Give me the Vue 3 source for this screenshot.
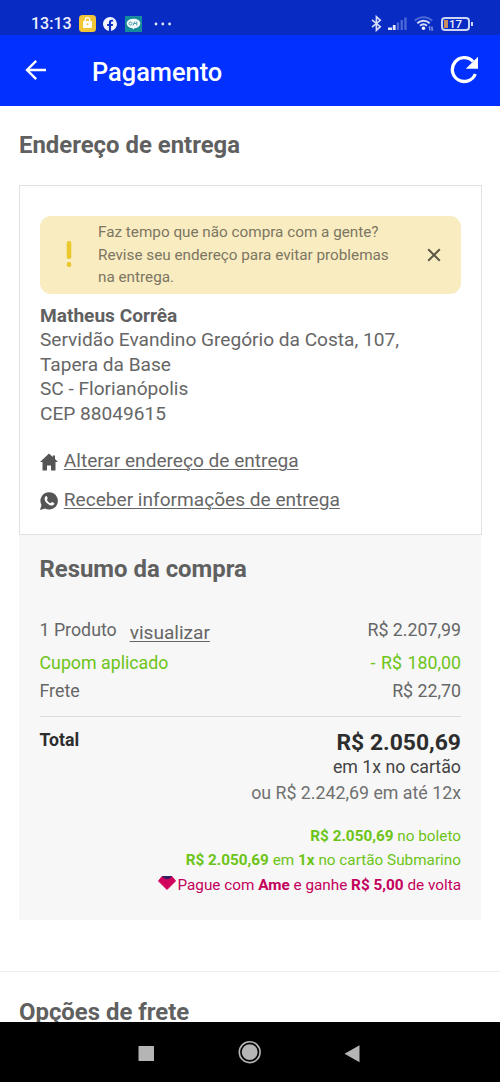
<script setup>
const address = [
  'Servidão Evandino Gregório da Costa, 107,',
  'Tapera da Base',
  'SC - Florianópolis',
  'CEP 88049615',
]
</script>

<template>
  <div class="screen">
    <div class="status">
      <span class="clock">13:13</span>
      <svg class="app-bag" width="17" height="17" viewBox="0 0 17 17">
        <rect width="17" height="17" rx="3.5" fill="#f2c537" />
        <path d="M6.2 6V5a2.3 2.3 0 0 1 4.6 0v1" fill="none" stroke="#fff" stroke-width="1.2" />
        <rect x="4" y="6" width="9" height="7" rx="1" fill="#fff" />
        <circle cx="8.5" cy="9.3" r="1" fill="#f2c537" />
      </svg>
      <svg class="app-fb" width="14" height="14" viewBox="0 0 24 24">
        <path fill="#f2f5ff" d="M24 12a12 12 0 1 0-13.9 11.9v-8.4H7.1V12h3V9.400c0-3 1.800-4.700 4.500-4.700 1.300 0 2.700.2 2.700.2v3h-1.500c-1.500 0-2 .9-2 1.900V12h3.400l-.5 3.500h-2.900v8.400A12 12 0 0 0 24 12z" />
      </svg>
      <svg class="app-oi" width="17" height="16" viewBox="0 0 17 16">
        <rect width="17" height="16" fill="#168b9c" />
        <ellipse cx="8.500" cy="7.500" rx="6.800" ry="4.800" fill="#f4fbfb" />
        <path d="M7 11.500h3l-1.500 2z" fill="#f4fbfb" />
        <circle cx="5.500" cy="7.500" r="1.500" fill="none" stroke="#4c9aa5" />
        <path d="M8 9.500 9.800 5.500M9 7.500h2.500M11.800 5.500v4" fill="none" stroke="#4c9aa5" />
      </svg>
      <svg class="more" width="18" height="4" viewBox="0 0 18 4" fill="#e6eaff">
        <circle cx="2" cy="2" r="1.400" /><circle cx="8.800" cy="2" r="1.400" /><circle cx="15.600" cy="2" r="1.400" />
      </svg>
      <svg class="bt" width="11" height="17" viewBox="0 0 11 17">
        <path d="M1 4.800 9.300 11.700 5.400 15.300V1.700L9.300 5.300 1 12.200" fill="none" stroke="#d9dff9" stroke-width="1.600" />
      </svg>
      <svg class="signal" width="19" height="13" viewBox="0 0 19 13">
        <path d="M0 10.500h4V13H0zM4.800 8h2.800v5h-2.800z" fill="#e4e9ff" />
        <path d="M8.800 5.500h2.300V13H8.800zM12.600 3h2.300v10h-2.300zM16.300.5h2.300V13h-2.300z" fill="#4e68d6" />
      </svg>
      <svg class="wifi" width="20" height="15" viewBox="0 0 20 15">
        <path d="M.8 4.800C5.700 0 13.300 0 18.200 4.800" fill="none" stroke="#4e68d6" stroke-width="1.900" />
        <path d="M3.300 7.300c3.600-3.400 8.800-3.400 12.400 0M6 9.800c2.100-1.900 4.900-1.900 7 0" fill="none" stroke="#d5dcfa" stroke-width="1.900" />
        <circle cx="9.500" cy="12.300" r="1.700" fill="#fff" />
        <path d="M15.800 10.500v4M15.800 10.500l-1 1M18 10.500v4M18 14.500l1-1" stroke="#aebbf0" fill="none" />
      </svg>
      <div class="battery"><i></i><span>17</span></div>
    </div>

    <header class="bar">
      <svg class="back" width="22" height="22" viewBox="0 0 22 22">
        <path d="M21 11H2.200M11.200 1.800 2 11l9.200 9.200" fill="none" stroke="#fff" stroke-width="2.400" />
      </svg>
      <h1>Pagamento</h1>
      <svg class="reload" width="28" height="28" viewBox="0 0 28 28">
        <path d="M23 5.500A11.900 11.900 0 1 0 25.300 18" fill="none" stroke="#fff" stroke-width="3.300" />
        <path d="M28 .8V12.800H15.800z" fill="#fff" />
      </svg>
    </header>

    <main>
      <h2 class="t-address">Endereço de entrega</h2>
      <section class="card">
        <div class="alert">
          <svg class="bang" width="6" height="27" viewBox="0 0 6 27" fill="#ecc82f">
            <rect x=".7" y="0" width="4.600" height="18" rx="2" />
            <rect x=".7" y="21" width="4.600" height="5" rx="2" />
          </svg>
          <p>Faz tempo que não compra com a gente?<br />Revise seu endereço para evitar problemas<br />na entrega.</p>
          <svg class="close" width="14" height="14" viewBox="0 0 14 14">
            <path d="M1.200 1.200l11.600 11.600M12.800 1.200 1.200 12.800" stroke="#5c5745" stroke-width="2" />
          </svg>
        </div>
        <div class="address">
          <strong>Matheus Corrêa</strong>
          <div v-for="line in address" :key="line">{{ line }}</div>
        </div>
        <div class="link">
          <svg width="18" height="18" viewBox="0 0 18 18">
            <path d="M9 .5 0 9h2.500v8.500H7v-5h4v5h4.500V9H18l-3-2.900V2.500h-2.200V4z" fill="#555" />
          </svg>
          <a>Alterar endereço de entrega</a>
        </div>
        <div class="link">
          <svg width="18" height="18" viewBox="0 0 18 18">
            <path d="M9.200.2a8.700 8.700 0 1 1-4.100 16.400L0 17.900l1.500-4.800A8.700 8.700 0 0 1 9.200.2z" fill="#555" />
            <path d="M5.500 4.400c.5-.5 1.200-.4 1.400.1l.8 1.700c.1.500-.7 1.200-.8 1.500.8 1.700 2 2.800 3.800 3.500.5-.3 1-1.300 1.500-1.100l1.800.9c.5.300.3 1.300-.1 1.800-1.100 1.100-2.700 1-4.500.1-2.300-1.100-4.200-3.100-4.700-5.100-.3-1.300 0-2.500.8-3.400z" fill="#fff" />
          </svg>
          <a>Receber informações de entrega</a>
        </div>
      </section>

      <section class="summary">
        <h2 class="t-summary">Resumo da compra</h2>
        <div class="row first"><span>1 Produto <a>visualizar</a></span><span>R$ 2.207,99</span></div>
        <div class="row green"><span>Cupom aplicado</span><span class="discount">- R$ 180,00</span></div>
        <div class="row"><span>Frete</span><span>R$ 22,70</span></div>
        <div class="total">
          <strong class="label">Total</strong>
          <div class="amounts">
            <strong class="price">R$ 2.050,69</strong>
            <span class="once">em 1x no cartão</span>
            <span class="parts">ou R$ 2.242,69 em até 12x</span>
          </div>
        </div>
        <div class="offers">
          <div><b>R$ 2.050,69</b> no boleto</div>
          <div><b>R$ 2.050,69</b> em <b>1x</b> no cartão Submarino</div>
          <div class="ame">
            <svg width="18" height="14" viewBox="0 0 18 14">
              <path d="M4 .5h10L17.500 5 9 13.500.5 5z" fill="#d1005d" stroke="#d1005d" stroke-linejoin="round" />
              <path d="M4 0h10l-2 2.200c-2 1.300-4 1.300-6 0z" fill="#33205e" />
            </svg>
            <span>Pague com <b>Ame</b> e ganhe <b>R$ 5,00</b> de volta</span>
          </div>
        </div>
      </section>

      <section class="shipping"><h2>Opções de frete</h2></section>
    </main>

    <nav>
      <svg width="500" height="60" viewBox="0 0 500 60" fill="#b5b5b5">
        <rect x="138.500" y="24" width="15.500" height="15" rx=".5" />
        <circle cx="249.700" cy="30.200" r="10.400" fill="none" stroke="#b5b5b5" stroke-width="1.600" />
        <circle cx="249.700" cy="30.200" r="7.900" />
        <path d="M359.500 23.300v17L344.500 31.800z" />
      </svg>
    </nav>
  </div>
</template>

<style>
body { margin: 0; background: #fff; }
</style>

<style scoped>
* { box-sizing: border-box; }
.screen { width: 500px; height: 1082px; display: flex; flex-direction: column; overflow: hidden; background: #fff; color: #666; font-family: Roboto, "Noto Sans", sans-serif; white-space: nowrap; }
h1, h2, p { margin: 0; }
.status { height: 35px; flex: none; display: flex; align-items: center; padding: 12px 30px 0 31px; background: #082bc4; color: #eef1ff; }
.status svg { flex: none; }
.clock { width: 48px; font-size: 16px; font-weight: 500; line-height: 22px; }
.app-fb { margin-left: 7px; }
.app-oi { margin-left: 8px; }
.more { margin-left: 12px; }
.bt { margin-left: auto; }
.signal { margin-left: 6px; }
.wifi { margin-left: 7px; }
.battery { width: 29px; height: 14px; margin-left: 7px; border: 2px solid #cdd5f7; border-radius: 4px; display: flex; align-items: center; position: relative; flex: none; }
.battery::after { content: ""; position: absolute; right: -5px; top: 3px; width: 2px; height: 4px; background: #cdd5f7; }
.battery i { width: 4px; height: 8px; margin-left: 1px; background: #c88e62; }
.battery span { margin-left: 1px; font-size: 11.500px; font-weight: 500; line-height: 10px; }
.bar { height: 70.500px; flex: none; display: flex; align-items: center; padding: 0 22px 0 25px; background: #0231ff; color: #fff; }
.bar h1 { margin-left: 45px; padding-top: 3px; font-size: 25.400px; font-weight: 500; line-height: 30px; }
.reload { margin-left: auto; }
main { flex: 1; min-height: 0; overflow: hidden; }
h2 { font-size: 23.900px; line-height: 30px; font-weight: 700; color: #606060; }
.t-address { margin: 24.500px 0 25px 19px; }
.card { width: 463px; height: 349.500px; margin-left: 19px; padding: 29.500px 20px 0 19.500px; border: 1px solid #e2e2e2; }
.alert { height: 78px; border-radius: 11px; background: #f9ecc1; display: flex; align-items: center; padding: 0 20px 0 26.500px; }
.alert p { margin-left: 26px; padding-top: 1px; font-size: 15.270px; line-height: 22.800px; color: #7c7662; }
.close { margin-left: auto; }
.address { margin-top: 10px; padding-left: .5px; font-size: 19.100px; line-height: 24.500px; }
.address strong { display: block; color: #606060; }
.link { height: 38.800px; padding-left: .3px; display: flex; align-items: center; font-size: 19.100px; }
.address + .link { margin-top: 15px; }
.link svg { margin: 3px 6px 0 0; }
a { text-decoration: underline; text-decoration-thickness: 1.300px; text-underline-offset: 2px; }
.summary { width: 462px; height: 385.500px; margin-left: 19px; padding: 19.500px 20px 0 20.500px; background: #f7f7f7; }
.row { height: 28px; line-height: 28px; display: flex; justify-content: space-between; font-size: 17.800px; }
.row.first { height: 38px; margin-top: 27px; line-height: 38px; }
.first a { position: relative; top: 3px; margin-left: 8.500px; font-size: 19.100px; line-height: 30px; }
.green { color: #6cc418; }
.discount { word-spacing: 1.200px; }
.total { margin-top: 11px; padding-top: 12.500px; border-top: 1.500px solid #ddd; display: flex; justify-content: space-between; color: #2d2d2d; }
.label { font-size: 17.700px; line-height: 21px; }
.amounts { display: flex; flex-direction: column; align-items: flex-end; }
.price { font-size: 22.900px; line-height: 25px; }
.once { margin-top: -1px; font-size: 17.800px; line-height: 25px; color: #444; }
.parts { font-size: 17.800px; line-height: 27px; color: #707070; }
.offers { margin-top: 18.300px; display: flex; flex-direction: column; align-items: flex-end; font-size: 15.300px; line-height: 24.400px; color: #6cc418; }
.ame { display: flex; align-items: center; color: #c4005c; }
.ame svg { margin: -3px 1.500px 0 0; }
.shipping { margin-top: 51px; padding: 25px 19px 0; border-top: 1.500px solid #eee; }
nav { height: 60.500px; flex: none; background: #000; }
nav svg { display: block; }
</style>
